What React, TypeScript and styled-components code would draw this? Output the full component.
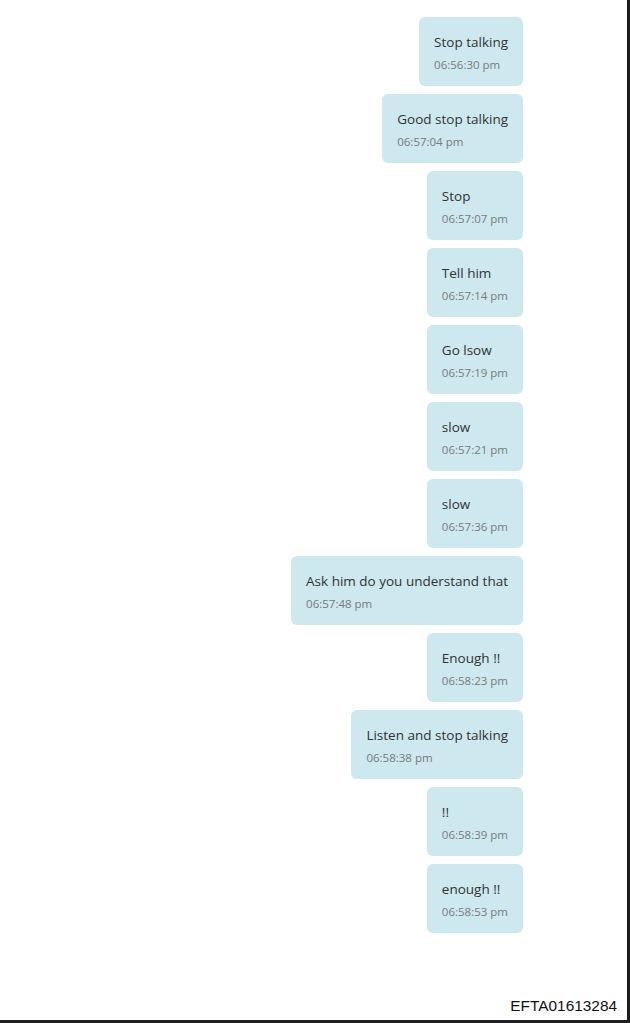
import styled, { createGlobalStyle } from "styled-components";

const GlobalStyle = createGlobalStyle`
  html, body {
    margin: 0;
    padding: 0;
    background: #ffffff;
  }
`;

const Page = styled.div`
  width: 630px;
  height: 1023px;
  box-sizing: border-box;
  border-right: 3px solid #1e1e1e;
  border-bottom: 3px solid #1e1e1e;
  background: #ffffff;
  display: flex;
  flex-direction: column;
`;

const Thread = styled.div`
  flex: 1;
  display: flex;
  flex-direction: column;
  align-items: flex-end;
  gap: 8px;
  padding: 17px 104px 0 0;
`;

const Bubble = styled.div`
  background: #cde8ee;
  border-radius: 6px;
  padding: 15px 15px 13px;
  font-family: "Open Sans", "Noto Sans", sans-serif;
`;

const Body = styled.div`
  font-size: 13.5px;
  line-height: 20px;
  color: #333333;
  white-space: nowrap;
`;

const Time = styled.div`
  margin-top: 5px;
  font-size: 11.5px;
  line-height: 16px;
  color: #7a7a7a;
  white-space: nowrap;
`;

const Footer = styled.div`
  text-align: right;
  padding: 0 10px 5px 0;
  font-family: "Liberation Sans", Arial, sans-serif;
  font-size: 15.4px;
  line-height: 18px;
  color: #111111;
`;

const messages = [
  { text: "Stop talking", time: "06:56:30 pm" },
  { text: "Good stop talking", time: "06:57:04 pm" },
  { text: "Stop", time: "06:57:07 pm" },
  { text: "Tell him", time: "06:57:14 pm" },
  { text: "Go lsow", time: "06:57:19 pm" },
  { text: "slow", time: "06:57:21 pm" },
  { text: "slow", time: "06:57:36 pm" },
  { text: "Ask him do you understand that", time: "06:57:48 pm" },
  { text: "Enough !!", time: "06:58:23 pm" },
  { text: "Listen and stop talking", time: "06:58:38 pm" },
  { text: "!!", time: "06:58:39 pm" },
  { text: "enough !!", time: "06:58:53 pm" },
];

export default function App() {
  return (
    <>
      <GlobalStyle />
      <Page>
        <Thread>
          {messages.map((m, i) => (
            <Bubble key={i}>
              <Body>{m.text}</Body>
              <Time>{m.time}</Time>
            </Bubble>
          ))}
        </Thread>
        <Footer>EFTA01613284</Footer>
      </Page>
    </>
  );
}
